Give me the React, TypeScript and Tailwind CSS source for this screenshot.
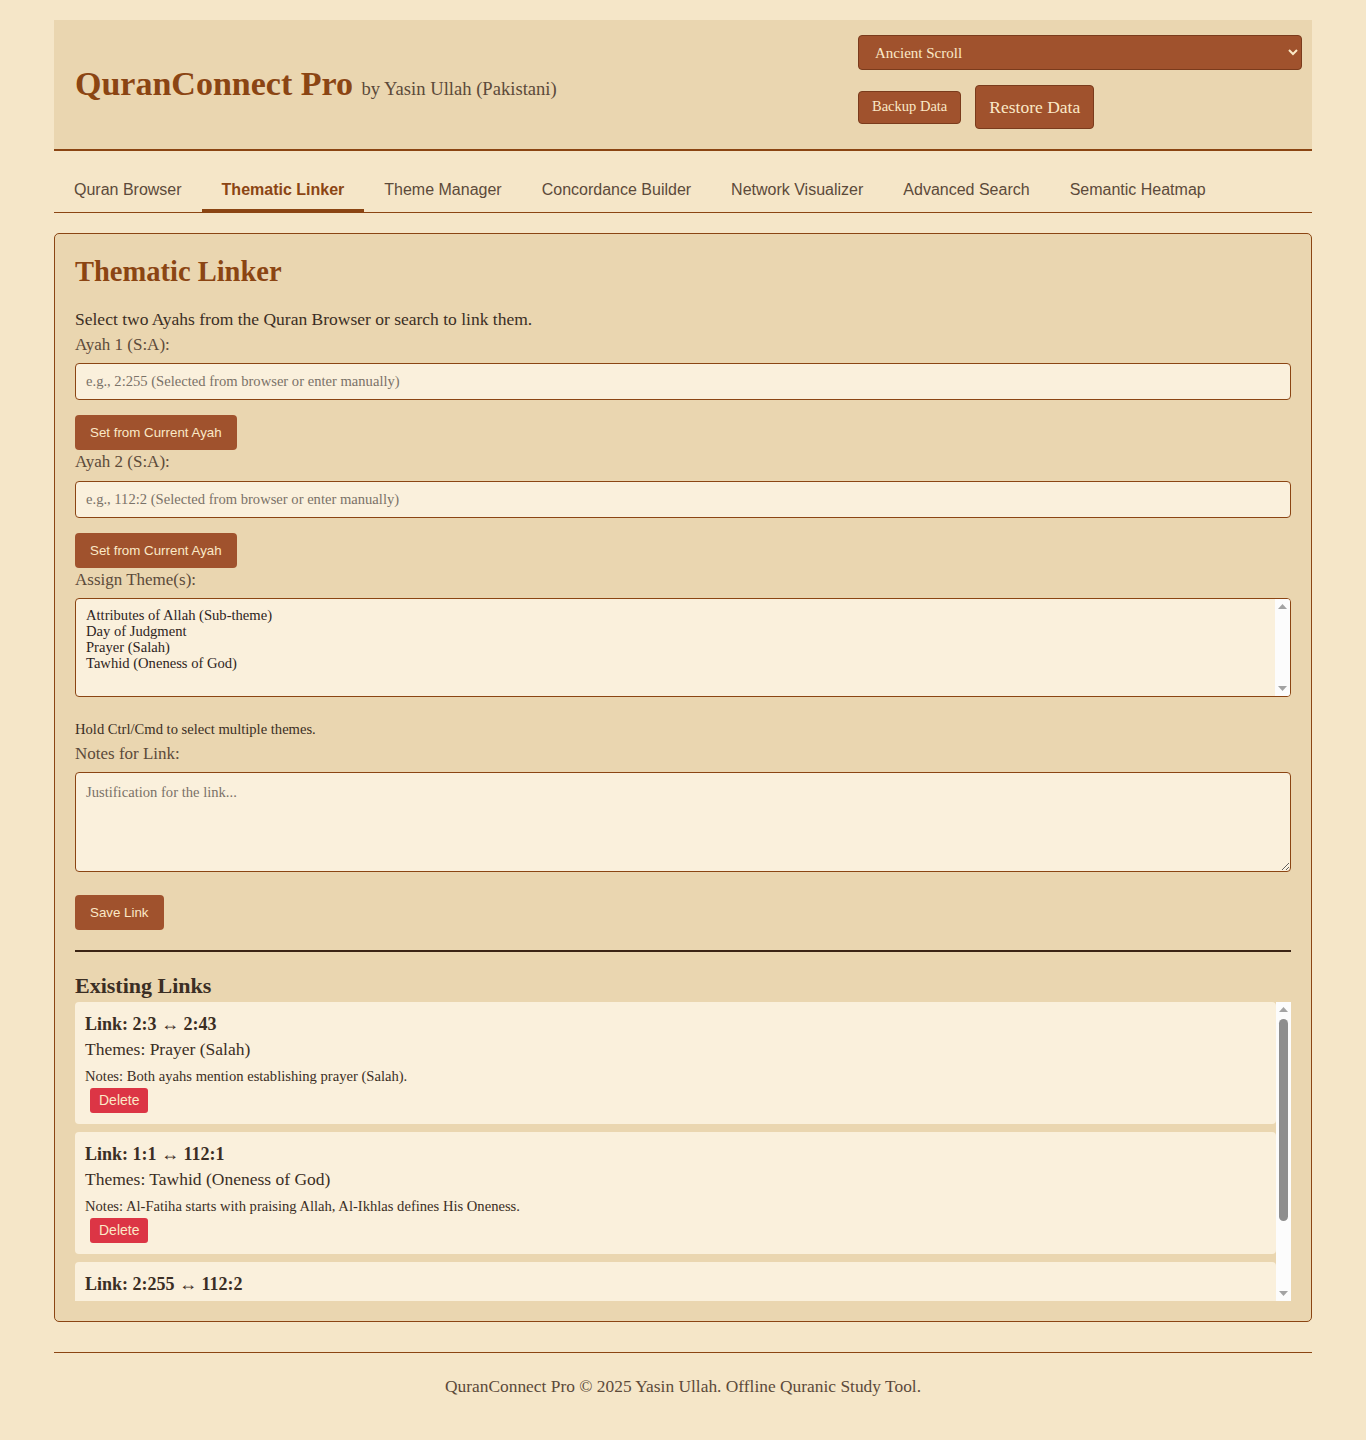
import { useState } from 'react'

const tabs = [
  'Quran Browser',
  'Thematic Linker',
  'Theme Manager',
  'Concordance Builder',
  'Network Visualizer',
  'Advanced Search',
  'Semantic Heatmap',
]

const themes = [
  'Attributes of Allah (Sub-theme)',
  'Day of Judgment',
  'Prayer (Salah)',
  'Tawhid (Oneness of God)',
]

const links = [
  {
    from: '2:3',
    to: '2:43',
    themes: 'Prayer (Salah)',
    notes: 'Both ayahs mention establishing prayer (Salah).',
  },
  {
    from: '1:1',
    to: '112:1',
    themes: 'Tawhid (Oneness of God)',
    notes: 'Al-Fatiha starts with praising Allah, Al-Ikhlas defines His Oneness.',
  },
  {
    from: '2:255',
    to: '112:2',
    themes: 'Attributes of Allah (Sub-theme)',
    notes: 'Ayat al-Kursi and Al-Ikhlas both describe the eternal nature of Allah.',
  },
]

function Arrow({ up }: { up?: boolean }) {
  return (
    <svg width="9" height="5" viewBox="0 0 9 5" className="fill-[#a3a3a3]">
      {up ? <path d="M4.5 0 L9 5 L0 5 Z" /> : <path d="M0 0 L9 0 L4.5 5 Z" />}
    </svg>
  )
}

// classic scrollbar look (track + arrows, optional thumb)
function ScrollTrack({ thumb }: { thumb?: number }) {
  return (
    <div className="flex w-[15px] shrink-0 flex-col bg-[#fcfcfc]">
      <div className="flex h-[15px] items-center justify-center">
        <Arrow up />
      </div>
      <div className="flex-1 px-[3px] pt-[2px]">
        {thumb ? <div className="w-[9px] rounded-full bg-[#8e8e8e]" style={{ height: thumb }} /> : null}
      </div>
      <div className="flex h-[15px] items-center justify-center">
        <Arrow />
      </div>
    </div>
  )
}

export default function App() {
  const [activeTab, setActiveTab] = useState('Thematic Linker')
  const [linkList, setLinkList] = useState(links)

  return (
    <div className="min-h-screen bg-[#f5e6c8] font-['Liberation_Serif',serif] text-[#3b2e24]">
      <div className="mx-auto w-[1258px] pt-[20px] pb-[45px]">
        {/* Header */}
        <header className="flex items-center justify-between border-b-2 border-[#8b4513] bg-[#ead6b0] pb-[20px] pl-[21px] pr-[10px] pt-[15px]">
          <h1 className="pt-[8px] text-[34px] font-bold leading-[40px] text-[#8b4513]">
            QuranConnect Pro{' '}
            <span className="text-[18.6px] font-normal text-[#5c4a3a]">by Yasin Ullah (Pakistani)</span>
          </h1>
          <div className="flex w-[444px] flex-col gap-[15px]">
            <select className="h-[35px] w-full rounded-[4px] border border-[#7a3b1c] bg-[#a0522d] pl-[12px] text-[15px] text-[#fbe9c7]">
              <option>Ancient Scroll</option>
              <option>Desert Night</option>
              <option>Emerald Garden</option>
            </select>
            <div className="flex items-center gap-[14px]">
              <button className="h-[33px] rounded-[4px] border border-[#7a3b1c] bg-[#a0522d] px-[13px] text-[14.5px] text-[#fbe9c7]">
                Backup Data
              </button>
              <button className="h-[44px] rounded-[4px] border border-[#7a3b1c] bg-[#a0522d] px-[13px] text-[17.5px] text-[#fbe9c7]">
                Restore Data
              </button>
            </div>
          </div>
        </header>

        {/* Tabs */}
        <nav className="mt-[20px] flex border-b border-[#8b4513] font-['Liberation_Sans',sans-serif]">
          {tabs.map((tab) => {
            const isActive = tab === activeTab
            return (
              <button
                key={tab}
                onClick={() => setActiveTab(tab)}
                className={`rounded-t-[3px] border-b-[3px] px-[20px] py-[10px] text-[16px] leading-[18px] ${
                  isActive ? 'border-[#8b4513] font-bold text-[#8b4513]' : 'border-transparent text-[#5c4a3a]'
                }`}
              >
                {tab}
              </button>
            )
          })}
        </nav>

        {/* Thematic Linker panel */}
        <section className="mt-[20px] rounded-[5px] border border-[#8b4513] bg-[#ead6b0] p-[20px]">
          <h2 className="mt-[4px] mb-[24px] text-[28.5px] font-bold leading-[28px] text-[#8b4513]">Thematic Linker</h2>
          <p className="mb-[8px] text-[17.5px] leading-[18px]">Select two Ayahs from the Quran Browser or search to link them.</p>

          <label className="mb-[9px] block text-[17px] leading-[18px] text-[#5c4a3a]">Ayah 1 (S:A):</label>
          <input
            className="block h-[37px] w-full rounded-[4px] border border-[#8b4513] bg-[#faf0dc] px-[10px] text-[14.6px] placeholder:text-[#7a7268]"
            placeholder="e.g., 2:255 (Selected from browser or enter manually)"
          />
          <button className="mt-[15px] block h-[35px] rounded-[4px] bg-[#a0522d] px-[15px] font-['Liberation_Sans',sans-serif] text-[13.33px] text-[#fbe9c7]">
            Set from Current Ayah
          </button>

          <label className="mt-[3px] mb-[10px] block text-[17px] leading-[18px] text-[#5c4a3a]">Ayah 2 (S:A):</label>
          <input
            className="block h-[37px] w-full rounded-[4px] border border-[#8b4513] bg-[#faf0dc] px-[10px] text-[14.6px] placeholder:text-[#7a7268]"
            placeholder="e.g., 112:2 (Selected from browser or enter manually)"
          />
          <button className="mt-[15px] block h-[35px] rounded-[4px] bg-[#a0522d] px-[15px] font-['Liberation_Sans',sans-serif] text-[13.33px] text-[#fbe9c7]">
            Set from Current Ayah
          </button>

          <label className="mt-[3px] mb-[9px] block text-[17px] leading-[18px] text-[#5c4a3a]">Assign Theme(s):</label>
          <div
            role="listbox"
            aria-multiselectable
            className="flex h-[99px] w-full overflow-hidden rounded-[4px] border border-[#8b4513] bg-[#faf0dc]"
          >
            <div className="flex-1 px-[10px] pt-[8px] text-[14.6px] leading-[16px] text-[#2e241c]">
              {themes.map((t) => (
                <div key={t} role="option">
                  {t}
                </div>
              ))}
            </div>
            <ScrollTrack />
          </div>

          <small className="mt-[24px] block text-[14.6px] leading-[16px]">Hold Ctrl/Cmd to select multiple themes.</small>

          <label className="mt-[8px] mb-[9px] block text-[17px] leading-[18px] text-[#5c4a3a]">Notes for Link:</label>
          <textarea
            className="block h-[100px] w-full rounded-[4px] border border-[#8b4513] bg-[#faf0dc] px-[10px] py-[9px] text-[14.6px] placeholder:text-[#7a7268]"
            placeholder="Justification for the link..."
          />
          <button className="mt-[23px] block h-[35px] rounded-[4px] bg-[#a0522d] px-[15px] font-['Liberation_Sans',sans-serif] text-[13.33px] text-[#fbe9c7]">
            Save Link
          </button>

          <hr className="mt-[20px] border-t-2 border-[#3b2414]" />

          <h3 className="mt-[23px] mb-[5px] text-[22px] font-bold leading-[22px]">Existing Links</h3>
          <div className="flex h-[299px] bg-[#ead6b0]">
            <div className="flex-1 overflow-hidden">
              {linkList.map((l, i) => (
                <div key={i} className="mb-[8px] rounded-[4px] bg-[#faf0dc] px-[10px] pt-[13px] pb-[11px]">
                  <div className="h-[18px] text-[18px] font-bold leading-[18px]">
                    Link: {l.from} ↔ {l.to}
                  </div>
                  <div className="mt-[7px] text-[17.5px] leading-[18px]">Themes: {l.themes}</div>
                  <div className="mt-[10px] text-[14.6px] leading-[16px]">Notes: {l.notes}</div>
                  <button
                    onClick={() => setLinkList(linkList.filter((_, j) => j !== i))}
                    className="mt-[4px] ml-[5px] h-[25px] rounded-[3px] bg-[#dc3545] px-[9px] font-['Liberation_Sans',sans-serif] text-[14px] text-[#fbe9c7]"
                  >
                    Delete
                  </button>
                </div>
              ))}
            </div>
            <ScrollTrack thumb={202} />
          </div>
        </section>

        <footer className="mt-[30px] border-t border-[#8b4513] pt-[24px] text-center text-[17.4px] leading-[18px] text-[#5c4a3a]">
          QuranConnect Pro © 2025 Yasin Ullah. Offline Quranic Study Tool.
        </footer>
      </div>
    </div>
  )
}
